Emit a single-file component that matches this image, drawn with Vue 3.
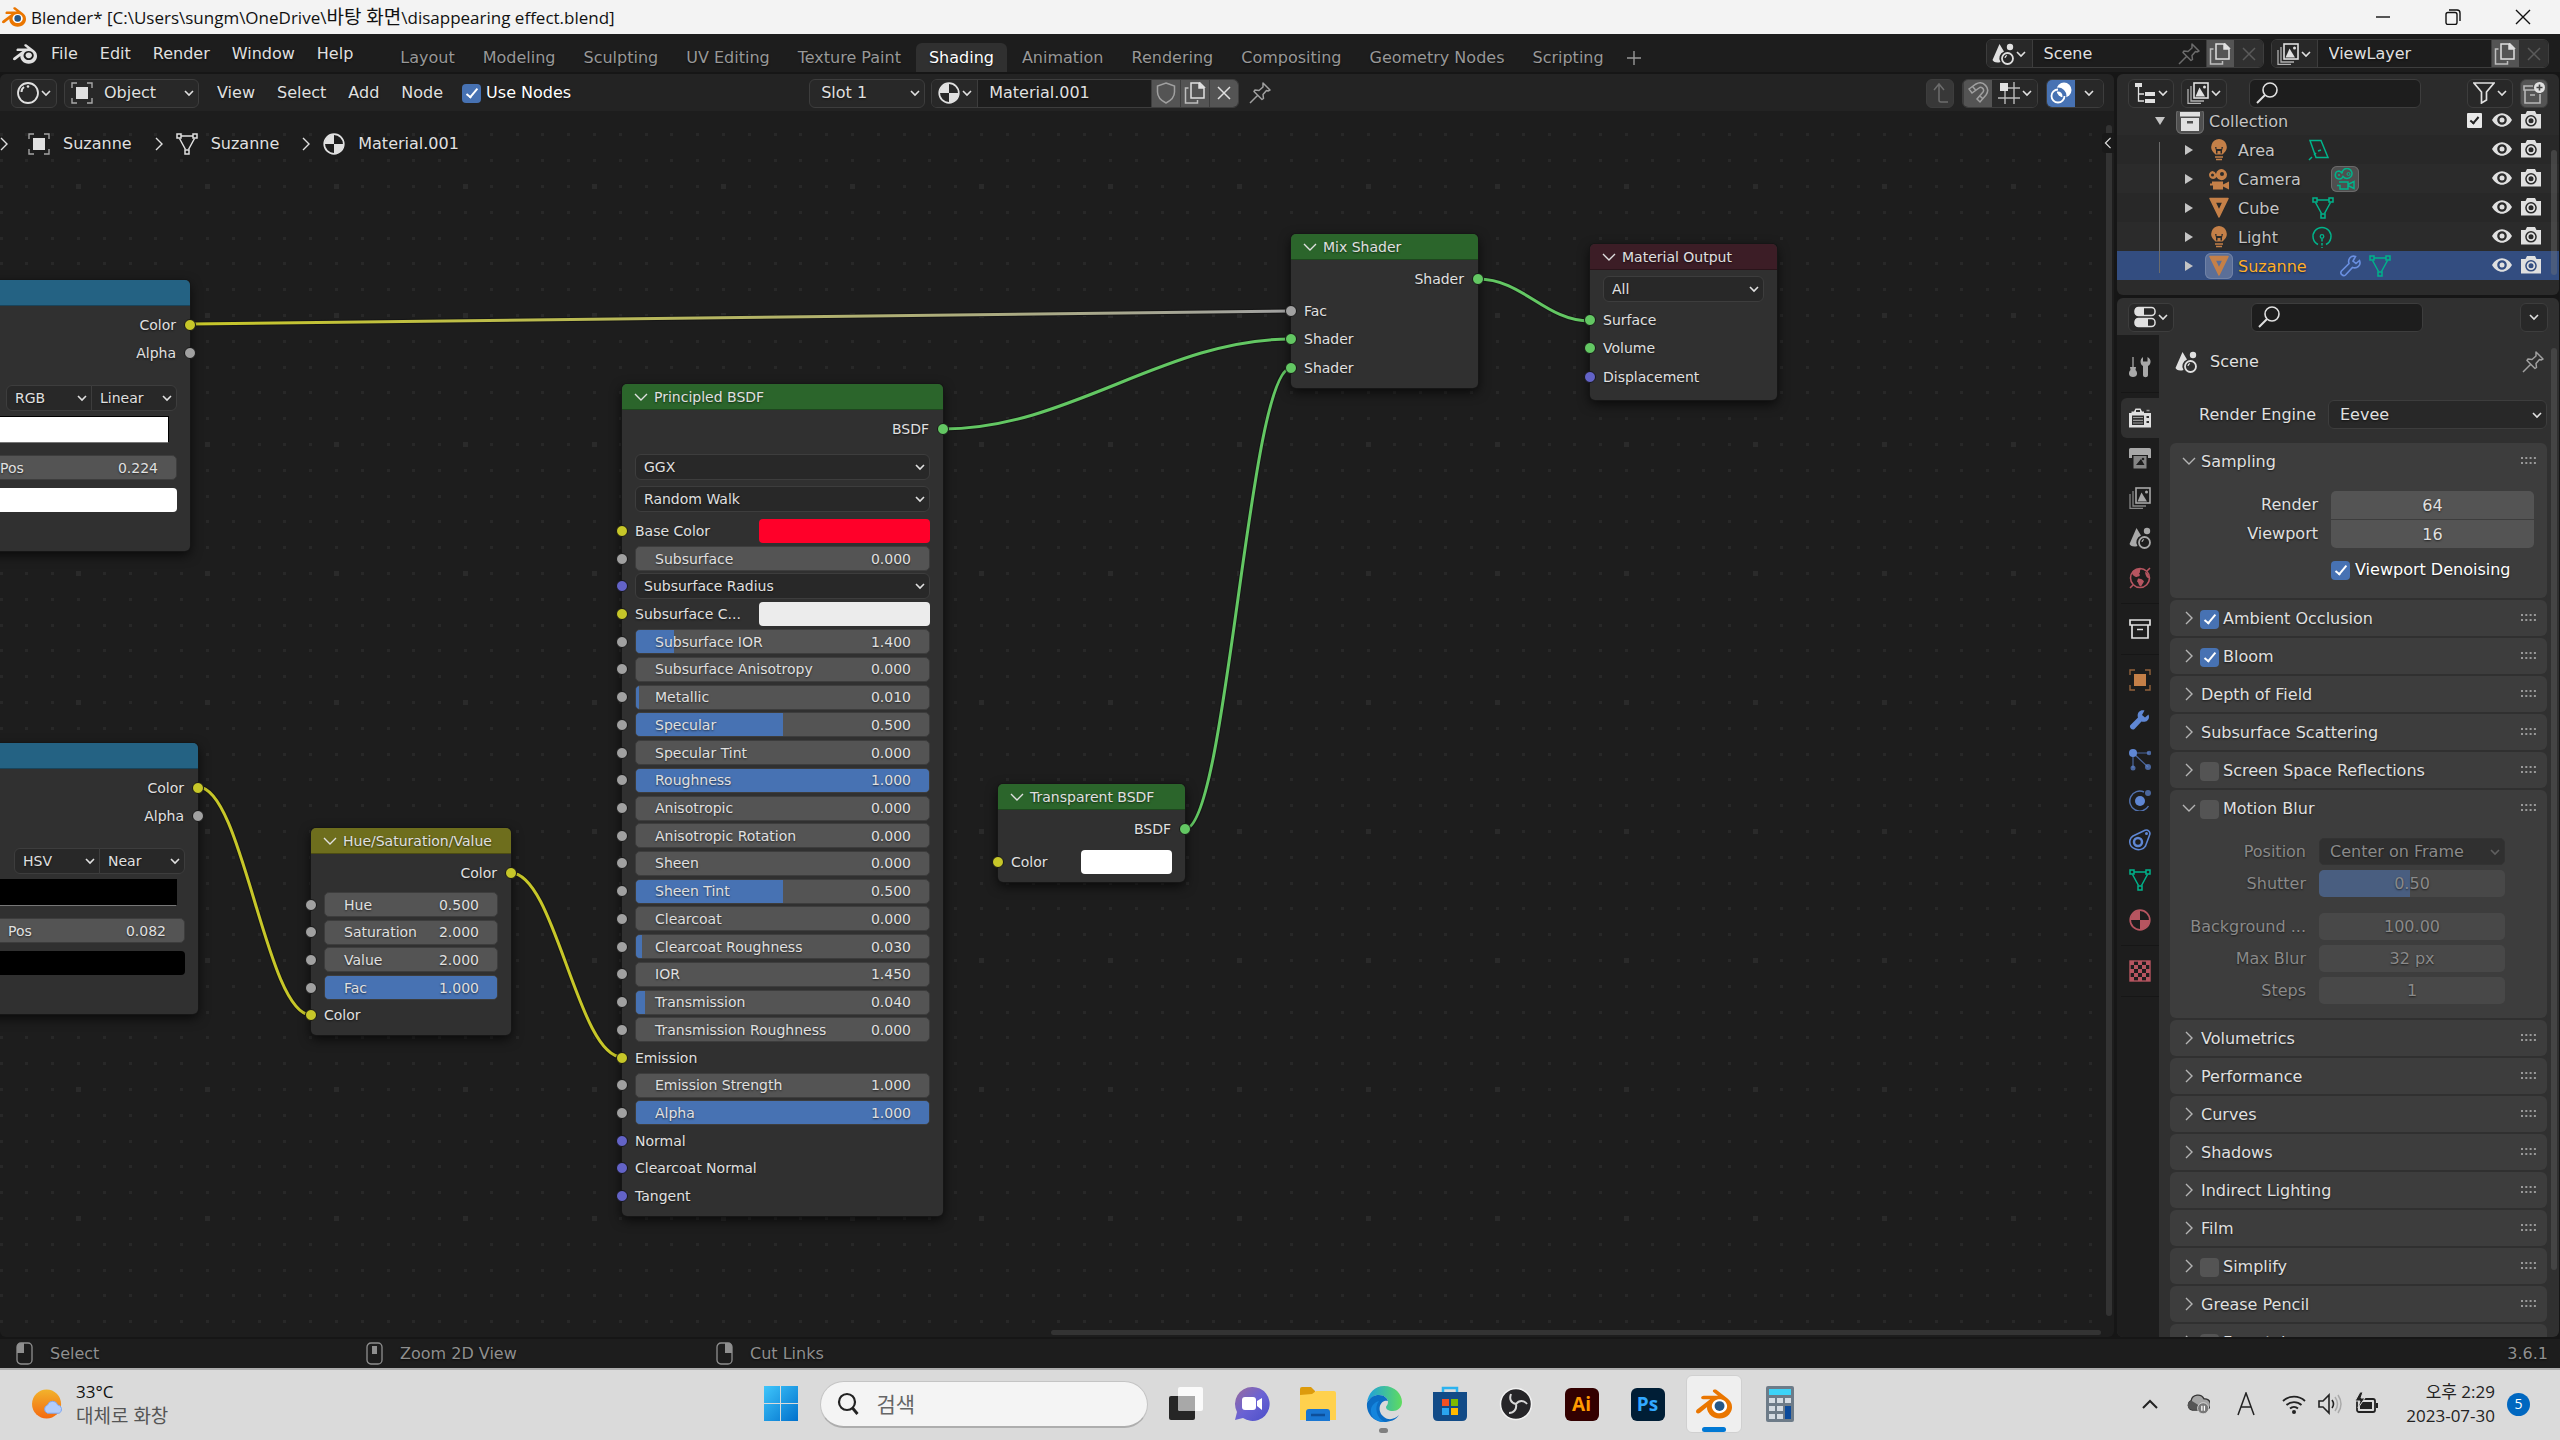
<template>
  <div class="desktop">
    <svg class="sprite" aria-hidden="true">
      <symbol id="i-blender" viewBox="0 0 24 24"><path fill="currentColor" d="M12.51 13.214c.046-.8.438-1.506 1.03-2.006a3.424 3.424 0 0 1 2.212-.79c.85 0 1.631.3 2.211.79.592.5.983 1.206 1.028 2.005.045.823-.285 1.586-.865 2.153a3.389 3.389 0 0 1-2.374.938 3.393 3.393 0 0 1-2.376-.938c-.58-.567-.91-1.33-.865-2.152M7.35 14.831c.006.314.106.922.256 1.398a7.372 7.372 0 0 0 1.593 2.757 8.227 8.227 0 0 0 2.787 2.001 8.947 8.947 0 0 0 3.66.76 8.964 8.964 0 0 0 3.657-.772 8.285 8.285 0 0 0 2.785-2.01 7.428 7.428 0 0 0 1.592-2.762 6.964 6.964 0 0 0 .25-3.074 7.123 7.123 0 0 0-1.016-2.779 7.764 7.764 0 0 0-1.852-2.043h.002L13.566 2.55l-.02-.015c-.492-.378-1.319-.376-1.86.002-.547.382-.609 1.015-.123 1.415l-.001.001 3.126 2.543-9.53.01h-.013c-.788.001-1.545.518-1.695 1.172-.154.665.38 1.217 1.2 1.22V8.9l4.83-.01-8.62 6.617-.034.025c-.813.622-1.075 1.658-.563 2.313.52.667 1.625.668 2.447.004L7.414 14s-.069.52-.063.831zm12.09 1.741c-.97.988-2.326 1.548-3.795 1.55-1.47.004-2.827-.552-3.797-1.538a4.51 4.51 0 0 1-1.036-1.622 4.282 4.282 0 0 1 .282-3.519 4.702 4.702 0 0 1 1.153-1.371c.942-.768 2.141-1.183 3.396-1.185 1.256-.002 2.455.41 3.398 1.175.48.391.87.854 1.152 1.367a4.28 4.28 0 0 1 .522 1.706 4.236 4.236 0 0 1-.239 1.811 4.54 4.54 0 0 1-1.035 1.626" /></symbol>
      <symbol id="i-blender-color" viewBox="0 0 24 24"><circle cx="15.7" cy="13.4" r="6" fill="#fff" /><circle cx="15.7" cy="13.4" r="3.3" fill="#265787" /><path fill="#ea7600" d="M7.35 14.831c.006.314.106.922.256 1.398a7.372 7.372 0 0 0 1.593 2.757 8.227 8.227 0 0 0 2.787 2.001 8.947 8.947 0 0 0 3.66.76 8.964 8.964 0 0 0 3.657-.772 8.285 8.285 0 0 0 2.785-2.01 7.428 7.428 0 0 0 1.592-2.762 6.964 6.964 0 0 0 .25-3.074 7.123 7.123 0 0 0-1.016-2.779 7.764 7.764 0 0 0-1.852-2.043h.002L13.566 2.55l-.02-.015c-.492-.378-1.319-.376-1.86.002-.547.382-.609 1.015-.123 1.415l-.001.001 3.126 2.543-9.53.01h-.013c-.788.001-1.545.518-1.695 1.172-.154.665.38 1.217 1.2 1.22V8.9l4.83-.01-8.62 6.617-.034.025c-.813.622-1.075 1.658-.563 2.313.52.667 1.625.668 2.447.004L7.414 14s-.069.52-.063.831zm12.09 1.741c-.97.988-2.326 1.548-3.795 1.55-1.47.004-2.827-.552-3.797-1.538a4.51 4.51 0 0 1-1.036-1.622 4.282 4.282 0 0 1 .282-3.519 4.702 4.702 0 0 1 1.153-1.371c.942-.768 2.141-1.183 3.396-1.185 1.256-.002 2.455.41 3.398 1.175.48.391.87.854 1.152 1.367a4.28 4.28 0 0 1 .522 1.706 4.236 4.236 0 0 1-.239 1.811 4.54 4.54 0 0 1-1.035 1.626" /></symbol>
      <symbol id="i-caret" viewBox="0 0 10 10"><path d="M1 3l4 4 4-4" fill="none" stroke="currentColor" stroke-width="1.6" /></symbol>
      <symbol id="i-chevron" viewBox="0 0 14 14"><path d="M1 4l6 6 6-6" fill="none" stroke="currentColor" stroke-width="1.4" /></symbol>
      <symbol id="i-chevron-right" viewBox="0 0 14 14"><path d="M4 1l6 6-6 6" fill="none" stroke="currentColor" stroke-width="1.4" /></symbol>
      <symbol id="i-triangle" viewBox="0 0 10 10"><path d="M1 0l8 5-8 5z" fill="currentColor" /></symbol>
      <symbol id="i-shader" viewBox="0 0 22 22"><circle cx="11" cy="11" r="10" fill="none" stroke="currentColor" stroke-width="1.8" /><path d="M4.5 10a6 6 0 0 1 2.500-5" fill="none" stroke="currentColor" stroke-width="2" /><circle cx="11" cy="4.5" r="1.3" fill="currentColor" /></symbol>
      <symbol id="i-object" viewBox="0 0 22 22"><rect x="5" y="5" width="12" height="12" fill="currentColor" /><path d="M1 6V1h5M16 1h5v5M21 16v5h-5M6 21H1v-5" fill="none" stroke="currentColor" stroke-width="1.4" opacity=".7" /></symbol>
      <symbol id="i-mesh" viewBox="0 0 22 22"><path d="M5 3h12M3.5 5.5l6 11M18.5 5.5l-6 11" fill="none" stroke="currentColor" stroke-width="1.5" /><path d="M1 1h4v4H1zM17 1h4v4h-4zM9 17h4v4H9z" fill="none" stroke="currentColor" stroke-width="1.5" /></symbol>
      <symbol id="i-meshobj" viewBox="0 0 22 22"><path d="M2 1.5h18L11 20z M7 5l4 8.5L15 5z" fill="currentColor" fill-rule="evenodd" stroke="currentColor" stroke-width="1.5" stroke-linejoin="round" /></symbol>
      <symbol id="i-material" viewBox="0 0 22 22"><circle cx="11" cy="11" r="9.8" fill="none" stroke="currentColor" stroke-width="1.7" /><path d="M11 1.5V11H1.5a9.5 9.5 0 0 1 9.5-9.5zM11 11h9.5a9.5 9.5 0 0 1-9.5 9.5z" fill="currentColor" /></symbol>
      <symbol id="i-shield" viewBox="0 0 22 22"><path d="M11 1l8.5 3v6c0 5-3.5 8.5-8.5 11-5-2.5-8.5-6-8.5-11V4z" fill="none" stroke="currentColor" stroke-width="1.5" /></symbol>
      <symbol id="i-copy" viewBox="0 0 22 22"><path d="M7 1h8v5h5v10H7zM16 1l4 4h-4z" fill="none" stroke="currentColor" stroke-width="1.5" /><path d="M15 0.5v5.5h5.5z" fill="currentColor" /><path d="M4.5 6H1.5v15h12v-3" fill="none" stroke="currentColor" stroke-width="1.5" opacity=".75" /></symbol>
      <symbol id="i-cross" viewBox="0 0 22 22"><path d="M5 5l12 12M17 5L5 17" fill="none" stroke="currentColor" stroke-width="1.5" /></symbol>
      <symbol id="i-pin" viewBox="0 0 22 22"><path d="M14 1l7 7-2 1-1.5-.5-3.5 4 .5 4-1.5 1-8-8 1-1.5 4 .5 4-3.5zM8.5 13.5L1 21" fill="none" stroke="currentColor" stroke-width="1.5" stroke-linejoin="round" /></symbol>
      <symbol id="i-up" viewBox="0 0 22 22"><path d="M5 8l5-6 5 6M10 2v16q0 2 2 2h7" fill="none" stroke="currentColor" stroke-width="1.5" /></symbol>
      <symbol id="i-magnet" viewBox="0 0 22 22"><path d="M2 7l7-5c7-4 15 4 10 11l-6 7-3-3 6-7c2-3-2-6-4-4l-7 5zM5.5 4.5l3.500 4M16 17l-3.500-3.500" fill="none" stroke="currentColor" stroke-width="1.5" /></symbol>
      <symbol id="i-grid" viewBox="0 0 22 22"><path d="M7 9v13M16 0v22M0 16h22M9 6h13" fill="none" stroke="currentColor" stroke-width="1.4" opacity=".8" /><rect x="2" y="1" width="8" height="8" fill="currentColor" /></symbol>
      <symbol id="i-overlay" viewBox="0 0 22 22"><circle cx="14" cy="8" r="7.5" fill="currentColor" /><circle cx="8" cy="14" r="6.5" fill="none" stroke="#4772b3" stroke-width="4" /><path d="M8 7.5a6.5 6.5 0 1 0 6.5 6.5" fill="none" stroke="currentColor" stroke-width="1.8" /><path d="M8 7.5a6.5 6.5 0 0 1 6.5 6.5" fill="none" stroke="#4772b3" stroke-width="1.5" /></symbol>
      <symbol id="i-scene" viewBox="0 0 22 22"><path d="M7.5 1L12 8.5a7 7 0 0 0-3.5 10.5C4 20.5 1 18.5 0.5 17z" fill="currentColor" /><circle cx="18" cy="4" r="3.2" fill="currentColor" /><circle cx="15.5" cy="15.5" r="5.5" fill="none" stroke="currentColor" stroke-width="1.8" /><path d="M13 15a3 3 0 0 1 2-2.5" fill="none" stroke="currentColor" stroke-width="1.2" /></symbol>
      <symbol id="i-layers" viewBox="0 0 22 22"><rect x="7" y="1" width="14" height="15" fill="none" stroke="currentColor" stroke-width="1.6" /><path d="M8.5 14.5l4-9 5.5 9z" fill="currentColor" /><circle cx="17.5" cy="5" r="1.5" fill="currentColor" /><path d="M4 4v15h13M1 7v14.5h13" fill="none" stroke="currentColor" stroke-width="1.3" opacity=".75" /></symbol>
      <symbol id="i-outliner" viewBox="0 0 22 22"><path d="M1 1h7v4H1zM11 10h10v4H11zM11 17h10v4H11z" fill="currentColor" /><path d="M4.5 5v14H10M4.5 12H10" fill="none" stroke="currentColor" stroke-width="1.3" /></symbol>
      <symbol id="i-search" viewBox="0 0 22 22"><circle cx="14" cy="8" r="7" fill="none" stroke="currentColor" stroke-width="1.6" /><path d="M9 13l-8 8" stroke="currentColor" stroke-width="2" /></symbol>
      <symbol id="i-filter" viewBox="0 0 22 22"><path d="M1 1h20l-7.5 9v8l-5 3V10z" fill="none" stroke="currentColor" stroke-width="1.7" /></symbol>
      <symbol id="i-newcol" viewBox="0 0 22 22"><path d="M10 4H1v4h11M2 8v13h15v-9M7 13h5" fill="none" stroke="currentColor" stroke-width="1.6" opacity=".7" /><circle cx="16.5" cy="5.5" r="5.5" fill="currentColor" /><path d="M16.5 2.5v6M13.5 5.5h6" stroke="#444" stroke-width="1.6" /></symbol>
      <symbol id="i-collection" viewBox="0 0 22 22"><path d="M1 2h20v5H1zM3 7v13h16V7M8 11.5h6" fill="none" stroke="currentColor" stroke-width="1.7" /></symbol>
      <symbol id="i-collection-full" viewBox="0 0 22 22"><path d="M1 2h20v4.5H1z" fill="currentColor" /><path fill-rule="evenodd" d="M2 8h18v13H2zM8 11v2.500h6V11z" fill="currentColor" /></symbol>
      <symbol id="i-bulb" viewBox="0 0 22 22"><path fill-rule="evenodd" d="M11 0a8 8 0 0 0-5 14l1.500 1.500h7L16 14a8 8 0 0 0-5-14zM7 8h1.5v2h5V8H15l-1 3.500v3h-1.500V12h-3v2.500H8v-3z" fill="currentColor" /><path d="M7 18h8M8 20.5h6" stroke="currentColor" stroke-width="1.5" /></symbol>
      <symbol id="i-movie" viewBox="0 0 22 22"><path fill-rule="evenodd" d="M4.500 3A4 4 0 1 0 8.500 9a5.500 5.500 0 1 0-.5-3A4 4 0 0 0 4.500 3zM4.500 5.500a1.500 1.500 0 1 1 0 3 1.500 1.500 0 0 1 0-3zM14 4a2 2 0 1 1 0 4 2 2 0 0 1 0-4zM4 13.500h11v3l6-3v8l-6-3v3H5v-4H2v-2h2z" fill="currentColor" /></symbol>
      <symbol id="i-movie-line" viewBox="0 0 22 22"><path d="M5 3a4 4 0 1 0 4 5.500 5 5 0 1 0-1-3A4 4 0 0 0 5 3zM5 14h9v2.500l6-3v7l-6-3V21H6v-3.500H3" fill="none" stroke="currentColor" stroke-width="1.5" /><circle cx="14.5" cy="6" r="1.5" fill="none" stroke="currentColor" /><circle cx="5" cy="7" r="1" fill="currentColor" /></symbol>
      <symbol id="i-area" viewBox="0 0 22 22"><path d="M2 1.5h11l7 17H8zM10 12l3-1M8 14l-2 2M4 18l-3 3" fill="none" stroke="currentColor" stroke-width="1.5" /></symbol>
      <symbol id="i-point" viewBox="0 0 22 22"><path d="M7 18.5a9 9 0 1 1 8 0" fill="none" stroke="currentColor" stroke-width="1.5" /><circle cx="11" cy="10.5" r="1.8" fill="none" stroke="currentColor" stroke-width="1.3" /><path d="M11 13v9" stroke="currentColor" stroke-width="1.5" stroke-dasharray="2.5 1.5" /></symbol>
      <symbol id="i-wrench" viewBox="0 0 22 22"><path d="M19.5 5.5l-3.500 3-3-2.500 2.500-4.500C11 0 7.500 4 9 8.500L1.500 16c-2 2.500 1.500 6 4 4l7-7.500c4.500 1.500 9-2 7-7z" fill="currentColor" /></symbol>
      <symbol id="i-wrench-line" viewBox="0 0 22 22"><path d="M19.5 5.5l-3.500 3-3-2.500 2.500-4.500C11 0 7.500 4 9 8.500L1.500 16c-2 2.500 1.500 6 4 4l7-7.500c4.500 1.500 9-2 7-7z" fill="none" stroke="currentColor" stroke-width="1.6" /></symbol>
      <symbol id="i-eye" viewBox="0 0 22 22"><path fill-rule="evenodd" d="M1 11c5-9 15-9 20 0-5 9-15 9-20 0zM11 6.2a4.800 4.800 0 1 0 0 9.600 4.800 4.800 0 0 0 0-9.600z" fill="currentColor" /><circle cx="11" cy="11" r="2.5" fill="currentColor" /></symbol>
      <symbol id="i-camera" viewBox="0 0 22 22"><path fill-rule="evenodd" d="M1 5h4.500L7 2h8l1.500 3H21v14.500H1zM11 6a5.800 5.800 0 1 0 0 11.600A5.800 5.800 0 0 0 11 6z" fill="currentColor" /><circle cx="11" cy="11.8" r="3.4" fill="none" stroke="currentColor" stroke-width="1.8" /></symbol>
      <symbol id="i-props" viewBox="0 0 22 22"><rect x="1" y="1.5" width="20" height="8" rx="3.5" fill="none" stroke="currentColor" stroke-width="1.5" /><rect x="1" y="12.5" width="20" height="8" rx="3.5" fill="none" stroke="currentColor" stroke-width="1.5" /><path d="M4 1.5h6v8H4a3 3 0 0 1-3-3v-2a3 3 0 0 1 3-3zM4 12.5h10v8H4a3 3 0 0 1-3-3v-2a3 3 0 0 1 3-3z" fill="currentColor" /></symbol>
      <symbol id="i-tool" viewBox="0 0 22 22"><path d="M4 1v10" stroke="currentColor" stroke-width="1.3" /><path d="M1 11h6l-.5 3c1.500 1 1.500 3 1.500 4 0 4-8 4-8 0 0-1 0-3 1.500-4z" fill="currentColor" /><path d="M14 1v4.500h4.500V1c4 2 4 7 .5 9v9c0 3-5 3-5 0v-9c-3.500-2-3-7 0-9z" fill="currentColor" /></symbol>
      <symbol id="i-render" viewBox="0 0 22 22"><path fill-rule="evenodd" d="M0 6h2.500V4.500H5L6.500 1.500h5L13 4.500h2V6h7v14.500H0zM3 8.500V18h12V8.500zM17.500 9v2H20V9zM17.500 14v2H20v-2zM7 3v2h4V3z" fill="currentColor" /><path d="M4 10.500h10M4 13.300h10M4 16h10" stroke="currentColor" stroke-width="1.2" opacity=".6" /><path d="M17.500 3.500h3" stroke="currentColor" stroke-width="1.5" opacity=".6" /></symbol>
      <symbol id="i-output" viewBox="0 0 22 22"><path d="M1.500 1h19a1.500 1.500 0 0 1 1.500 1.500V11h-3V8H3v3H0V2.500A1.500 1.500 0 0 1 1.500 1z" fill="currentColor" /><path fill-rule="evenodd" d="M4.500 9h13v12.500h-13zM7 18h8.500l-3.500-6z" fill="currentColor" opacity=".75" /><circle cx="14" cy="12" r="1.3" fill="#222" /></symbol>
      <symbol id="i-world" viewBox="0 0 22 22"><circle cx="11" cy="11" r="9.5" fill="none" stroke="currentColor" stroke-width="1.6" /><path d="M3 5c3-4 7-3.500 9-3-2 2 0 3-2 4.500 1.500 1 1 3-1 3-2 .5-1.500 1-3 0S3 8 3 5zM9 11.500c3 0 5 1 6 3-1 2-2 3-3 5-3-1-2-4-4-5zM16 5c2 0 4 3 4.500 6-2 1-4-2-4.500-6z" fill="currentColor" /><path d="M1 21l3-3M18 4l3-3" stroke="currentColor" stroke-width="1.6" /></symbol>
      <symbol id="i-particles" viewBox="0 0 22 22"><path d="M4 4h16M4 4v15M4 4l15 14" fill="none" stroke="currentColor" stroke-width="1.2" opacity=".7" /><circle cx="4" cy="4" r="4" fill="currentColor" /><circle cx="20" cy="4" r="2.3" fill="currentColor" opacity=".7" /><circle cx="4" cy="19" r="2.5" fill="currentColor" opacity=".7" /><circle cx="19" cy="18" r="3" fill="currentColor" opacity=".7" /></symbol>
      <symbol id="i-physics" viewBox="0 0 22 22"><circle cx="11" cy="12" r="5" fill="currentColor" /><path d="M15 3a10 10 0 1 0 4.500 14" fill="none" stroke="currentColor" stroke-width="1.4" opacity=".8" /><circle cx="19" cy="4" r="3" fill="currentColor" opacity=".7" /></symbol>
      <symbol id="i-constraint" viewBox="0 0 22 22"><path d="M4 7L16 1.200c3-1 6 2 4.500 5L16.500 17C12 24-1 20 1 11c.5-2 1.500-3 3-4z" fill="none" stroke="currentColor" stroke-width="1.6" /><circle cx="9" cy="13" r="4" fill="none" stroke="currentColor" stroke-width="2.5" /><circle cx="17.5" cy="4.5" r="1.5" fill="currentColor" /></symbol>
      <symbol id="i-texture" viewBox="0 0 22 22"><rect x="1" y="1" width="20" height="20" fill="none" stroke="currentColor" stroke-width="1.4" /><path d="M1 1h4v4H1zM9 1h4v4H9zM17 1h4v4h-4zM5 5h4v4H5zM13 5h4v4h-4zM1 9h4v4H1zM9 9h4v4H9zM17 9h4v4h-4zM5 13h4v4H5zM13 13h4v4h-4zM1 17h4v4H1zM9 17h4v4H9zM17 17h4v4h-4z" fill="currentColor" /></symbol>
      <symbol id="i-dots" viewBox="0 0 15 8"><path d="M0 1h15M0 6h15" stroke="currentColor" stroke-width="2" stroke-dasharray="2 2.3" /></symbol>
    </svg>

    <header class="titlebar">
      <svg class="titlebar__logo"><use href="#i-blender-color" /></svg>
      <h1 class="titlebar__text">Blender* [C:\Users\sungm\OneDrive\<span class="ko">바탕 화면</span>\disappearing effect.blend]</h1>
      <div class="titlebar__buttons">
        <button aria-label="Minimize"><svg viewBox="0 0 16 16"><path d="M1 8h14" /></svg></button>
        <button aria-label="Restore"><svg viewBox="0 0 16 16"><rect x="1" y="3.5" width="11" height="12" rx="2" /><path d="M4 1h8q3 0 3 3v8" /></svg></button>
        <button aria-label="Close"><svg viewBox="0 0 16 16"><path d="M1 1l14 14M15 1L1 15" /></svg></button>
      </div>
    </header>

    <div class="blender">
      <nav class="topbar">
        <svg class="topbar__logo"><use href="#i-blender" /></svg>
        <div class="menus">
          <button v-for="m in mainMenus" :key="m">{{ m }}</button>
        </div>
        <div class="workspaces">
          <button v-for="w in workspaces" :key="w" :class="{ active: w === 'Shading' }">{{ w }}</button>
          <button class="workspaces__add" aria-label="Add workspace">
            <svg viewBox="0 0 14 14"><path d="M7 0v14M0 7h14" stroke="currentColor" stroke-width="1.4" /></svg>
          </button>
        </div>
        <div v-for="b in idBlocks" :key="b.name" class="group idblock">
          <button class="group__menu" :aria-label="b.name"><svg class="icon"><use :href="'#' + b.icon" /></svg><svg class="caret"><use href="#i-caret" /></svg></button>
          <div class="idblock__name">
            <input :value="b.name" :aria-label="b.name + ' name'" />
            <svg v-if="b.pin" class="icon dim"><use href="#i-pin" /></svg>
          </div>
          <button class="group__lit" aria-label="New"><svg class="icon"><use href="#i-copy" /></svg></button>
          <button class="group__off" aria-label="Remove" disabled><svg class="icon"><use href="#i-cross" /></svg></button>
        </div>
      </nav>

      <main class="areas">
        <section class="editor">
          <div class="header">
            <button class="btn editor__type" aria-label="Editor type"><svg class="icon"><use href="#i-shader" /></svg><svg class="caret"><use href="#i-caret" /></svg></button>
            <div class="menu editor__mode">
              <svg class="icon"><use href="#i-object" /></svg>
              <select aria-label="Shader type"><option>Object</option></select>
              <svg class="caret"><use href="#i-caret" /></svg>
            </div>
            <div class="menus editor__menus">
              <button v-for="m in nodeMenus" :key="m">{{ m }}</button>
            </div>
            <label class="check"><input type="checkbox" checked />Use Nodes</label>
            <div class="menu editor__slot">
              <select aria-label="Slot"><option>Slot 1</option></select>
              <svg class="caret"><use href="#i-caret" /></svg>
            </div>
            <div class="group">
              <button class="group__menu" aria-label="Browse material"><svg class="icon"><use href="#i-material" /></svg><svg class="caret"><use href="#i-caret" /></svg></button>
              <div class="idblock__name"><input value="Material.001" aria-label="Material name" /></div>
              <button class="group__lit" aria-label="Fake user"><svg class="icon soft"><use href="#i-shield" /></svg></button>
              <button class="group__lit" aria-label="New material"><svg class="icon"><use href="#i-copy" /></svg></button>
              <button class="group__lit" aria-label="Unlink"><svg class="icon"><use href="#i-cross" /></svg></button>
            </div>
            <button class="plain" aria-label="Pin"><svg class="icon soft"><use href="#i-pin" /></svg></button>
            <div class="header__right">
              <button class="btn btn--off" aria-label="Parent node tree"><svg class="icon dim"><use href="#i-up" /></svg></button>
              <div class="group group--snap">
                <button class="group__lit" aria-label="Snap"><svg class="icon soft"><use href="#i-magnet" /></svg></button>
                <button class="group__menu" aria-label="Snap to"><svg class="icon"><use href="#i-grid" /></svg><svg class="caret"><use href="#i-caret" /></svg></button>
              </div>
              <div class="group group--overlay">
                <button class="group__on" aria-label="Overlays"><svg class="icon"><use href="#i-overlay" /></svg></button>
                <button class="group__drop" aria-label="Overlay options"><svg class="caret"><use href="#i-caret" /></svg></button>
              </div>
            </div>
          </div>

          <div class="canvas">
            <svg class="canvas__wires">
              <defs>
                <pattern id="grid" x="76" y="-56" width="129" height="129" patternUnits="userSpaceOnUse">
                  <template v-for="gx in gridSteps" :key="gx">
                    <rect v-for="gy in gridSteps" :key="gy" :x="gx" :y="gy" width="3" height="3" fill="#282828" />
                  </template>
                  <rect x="0" y="0" width="5" height="5" fill="#2a2a2a" />
                </pattern>
                <linearGradient id="fade" gradientUnits="userSpaceOnUse" x1="190" y1="0" x2="1291" y2="0">
                  <stop offset="0" stop-color="#c7c729" />
                  <stop offset="1" stop-color="#a1a1a1" />
                </linearGradient>
              </defs>
              <rect width="100%" height="100%" fill="url(#grid)" />
              <g v-for="l in links" :key="l.path" fill="none">
                <path :d="l.path" stroke="#161616" stroke-width="5" />
                <path :d="l.path" :stroke="l.color" stroke-width="3" />
              </g>
            </svg>

            <div class="crumbs">
              <svg class="crumbs__tab"><use href="#i-chevron-right" /></svg>
              <svg class="icon"><use href="#i-object" /></svg><span>Suzanne</span>
              <svg class="crumbs__sep"><use href="#i-chevron-right" /></svg>
              <svg class="icon"><use href="#i-mesh" /></svg><span>Suzanne</span>
              <svg class="crumbs__sep"><use href="#i-chevron-right" /></svg>
              <svg class="icon"><use href="#i-material" /></svg><span>Material.001</span>
            </div>

            <article
              v-for="(n, ni) in nodes"
              :key="ni"
              class="node"
              :style="{ left: n.x + 'px', top: n.y + 'px', width: n.w + 'px', height: n.h + 'px' }"
            >
              <h2 class="node__title" :class="'node__title--' + n.kind">
                <svg><use href="#i-chevron" /></svg>{{ n.title }}
              </h2>
              <div v-if="n.outs" class="node__outs">
                <p v-for="o in n.outs" :key="o.label">{{ o.label }}<i class="socket socket--out" :class="o.type" /></p>
              </div>
              <div v-if="n.menus" class="node__menus" :class="{ tight: !n.outs }">
                <div v-for="m in n.menus" :key="m" class="menu">
                  <select :aria-label="m"><option>{{ m }}</option></select>
                  <svg class="caret"><use href="#i-caret" /></svg>
                </div>
              </div>
              <div v-if="n.ramp" class="ramp">
                <div class="ramp__modes">
                  <div v-for="m in n.ramp.modes" :key="m" class="menu">
                    <select :aria-label="m"><option>{{ m }}</option></select>
                    <svg class="caret"><use href="#i-caret" /></svg>
                  </div>
                </div>
                <div class="ramp__band" :class="n.ramp.tone" />
                <label class="field ramp__pos"><span>Pos</span><input :value="n.ramp.pos" /></label>
                <button class="swatch ramp__swatch" :class="n.ramp.tone" aria-label="Stop color" />
              </div>
              <div v-if="n.ins" class="node__ins" :class="{ 'after-menus': n.menus }">
                <div v-for="(s, si) in n.ins" :key="si" class="node__row">
                  <i class="socket" :class="s.type" />
                  <label v-if="s.value" class="field">
                    <b v-if="s.fill" class="field__fill" :style="{ width: s.fill + '%' }" />
                    <span>{{ s.label }}</span><input :value="s.value" />
                  </label>
                  <div v-else-if="s.menu" class="menu">
                    <select :aria-label="s.label"><option>{{ s.label }}</option></select>
                    <svg class="caret"><use href="#i-caret" /></svg>
                  </div>
                  <template v-else>
                    <span>{{ s.label }}</span>
                    <button v-if="s.tone" class="swatch" :class="s.tone" :aria-label="s.label" />
                  </template>
                </div>
              </div>
            </article>

            <div class="canvas__vbar" />
            <div class="canvas__hbar" />
            <button class="canvas__side" aria-label="Show sidebar"><svg><use href="#i-chevron-right" /></svg></button>
          </div>
        </section>

        <aside class="sidebar">
          <section class="outliner">
            <div class="header">
              <button class="btn" aria-label="Editor type"><svg class="icon"><use href="#i-outliner" /></svg><svg class="caret"><use href="#i-caret" /></svg></button>
              <button class="btn" aria-label="Display mode"><svg class="icon"><use href="#i-layers" /></svg><svg class="caret"><use href="#i-caret" /></svg></button>
              <label class="search"><svg class="icon"><use href="#i-search" /></svg><input aria-label="Filter outliner" /></label>
              <button class="btn outliner__filter" aria-label="Filter"><svg class="icon"><use href="#i-filter" /></svg><svg class="caret"><use href="#i-caret" /></svg></button>
              <button class="btn btn--new" aria-label="New collection"><svg class="icon"><use href="#i-newcol" /></svg></button>
            </div>
            <div class="outliner__body">
              <ul class="tree">
                <li v-for="o in objects" :key="o.name" class="tree__row" :class="{ root: o.root, selected: o.selected }">
                  <svg class="tree__arrow"><use href="#i-triangle" /></svg>
                  <span class="tree__icon" :class="{ boxed: o.root || o.selected }"><svg class="icon"><use :href="'#' + o.icon" /></svg></span>
                  <span class="tree__name">{{ o.name }}</span>
                  <span class="tree__data">
                    <span v-for="d in o.data" :key="d" :class="{ boxed: d === 'i-movie-line', wrench: d === 'i-wrench-line' }"><svg class="icon"><use :href="'#' + d" /></svg></span>
                  </span>
                  <span class="tree__toggles">
                    <input v-if="o.root" type="checkbox" class="tree__check" checked aria-label="Exclude from view layer" />
                    <button aria-label="Hide in viewport"><svg class="icon"><use href="#i-eye" /></svg></button>
                    <button aria-label="Disable in renders"><svg class="icon"><use href="#i-camera" /></svg></button>
                  </span>
                </li>
              </ul>
              <div class="outliner__line" />
              <div class="outliner__bar" />
            </div>
          </section>

          <section class="props">
            <div class="header">
              <button class="btn" aria-label="Editor type"><svg class="icon"><use href="#i-props" /></svg><svg class="caret"><use href="#i-caret" /></svg></button>
              <label class="search"><svg class="icon"><use href="#i-search" /></svg><input aria-label="Search properties" /></label>
              <button class="btn props__options" aria-label="Options"><svg class="caret"><use href="#i-caret" /></svg></button>
            </div>
            <div class="props__main">
              <nav class="tabs">
                <div v-for="(g, gi) in tabs" :key="gi" class="tabs__group">
                  <button v-for="t in g" :key="t.icon" :class="{ active: t.active }" :aria-label="t.label"><svg class="icon" :class="t.tint"><use :href="'#' + t.icon" /></svg></button>
                </div>
              </nav>
              <div class="props__body">
                <div class="props__context">
                  <svg class="icon"><use href="#i-scene" /></svg>Scene
                  <button class="plain" aria-label="Pin"><svg class="icon soft"><use href="#i-pin" /></svg></button>
                </div>
                <div class="props__engine">
                  <label for="engine">Render Engine</label>
                  <div class="menu"><select id="engine"><option>Eevee</option></select><svg class="caret"><use href="#i-caret" /></svg></div>
                </div>

                <section v-for="p in panels" :key="p.title" class="panel">
                  <h3 class="panel__head">
                    <svg class="panel__arrow"><use :href="p.open ? '#i-chevron' : '#i-chevron-right'" /></svg>
                    <label v-if="p.check !== undefined" class="check"><input type="checkbox" :checked="p.check" />{{ p.title }}</label>
                    <span v-else>{{ p.title }}</span>
                    <svg class="panel__grip"><use href="#i-dots" /></svg>
                  </h3>
                  <div v-if="p.title === 'Sampling'" class="sampling">
                    <label for="s-render">Render</label><input id="s-render" value="64" />
                    <label for="s-view">Viewport</label><input id="s-view" value="16" />
                    <label class="check"><input type="checkbox" checked />Viewport Denoising</label>
                  </div>
                  <div v-if="p.title === 'Motion Blur'" class="blur">
                    <label for="b-pos">Position</label>
                    <div class="menu"><select id="b-pos" disabled><option>Center on Frame</option></select><svg class="caret"><use href="#i-caret" /></svg></div>
                    <label for="b-shutter">Shutter</label><input id="b-shutter" class="half" value="0.50" disabled />
                    <label for="b-bg" class="blur__gap">Background ...</label><input id="b-bg" class="blur__gap" value="100.00" disabled />
                    <label for="b-max">Max Blur</label><input id="b-max" value="32 px" disabled />
                    <label for="b-steps">Steps</label><input id="b-steps" value="1" disabled />
                  </div>
                </section>
                <div class="props__bar" />
              </div>
            </div>
          </section>
        </aside>
      </main>

      <footer class="status">
        <span v-for="s in hints" :key="s.text" class="status__hint">
          <svg viewBox="0 0 18 24"><rect x="1" y="1" width="15" height="21" rx="4" fill="none" stroke="currentColor" stroke-width="1.3" /><path :d="s.button" fill="currentColor" /></svg>{{ s.text }}
        </span>
        <span class="status__version">3.6.1</span>
      </footer>
    </div>

    <footer class="taskbar">
      <button class="weather">
        <svg viewBox="0 0 34 32">
          <defs>
            <linearGradient id="sun" x1="0" y1="0" x2="0" y2="1"><stop offset="0" stop-color="#f2b32c" /><stop offset="1" stop-color="#f4690f" /></linearGradient>
          </defs>
          <circle cx="15" cy="15.5" r="15" fill="url(#sun)" />
          <path d="M16 25a4.500 4.500 0 0 1 0-8.500 5.500 5.500 0 0 1 10.500 0A4.500 4.500 0 0 1 28 25z" fill="#b3cdfb" stroke="#7fa5ee" />
        </svg>
        <span><b>33°C</b><span class="ko">대체로 화창</span></span>
      </button>

      <div class="apps">
        <button class="apps__start" aria-label="Start">
          <svg viewBox="0 0 36 36">
            <defs><linearGradient id="win" x1="0" y1="0" x2="1" y2="1"><stop offset="0" stop-color="#3fc6fb" /><stop offset="1" stop-color="#0070cc" /></linearGradient></defs>
            <path d="M1 0h16v17H1zM18 0h17v17H18zM1 18h16v17H1zM18 18h17v17H18z" fill="url(#win)" />
          </svg>
        </button>
        <label class="apps__search">
          <svg viewBox="0 0 24 24"><circle cx="11" cy="10" r="8" fill="none" stroke="#222" stroke-width="2.2" /><path d="M16.5 16l5 6" stroke="#222" stroke-width="2.8" /></svg>
          <input placeholder="검색" aria-label="검색" />
        </label>
        <button aria-label="Task view">
          <svg viewBox="0 0 36 36"><rect x="1" y="10" width="26" height="24" rx="2" fill="#262626" /><rect x="10" y="1" width="25" height="24" rx="2" fill="#fff" opacity=".85" /><path d="M10 10h17v15H12q-2 0-2-2z" fill="#a8a8a8" /></svg>
        </button>
        <button aria-label="Chat">
          <svg viewBox="0 0 36 36">
            <defs><linearGradient id="chat" x1="0" y1="0" x2="1" y2="1"><stop offset="0" stop-color="#9a6b9a" /><stop offset=".5" stop-color="#6a62d4" /><stop offset="1" stop-color="#4b4fc8" /></linearGradient></defs>
            <path d="M18 1a17 17 0 1 1-9 31l-8 2 2-8A17 17 0 0 1 18 1z" fill="url(#chat)" /><rect x="8" y="11" width="14" height="13" rx="3" fill="#fff" /><path d="M23 15l5-3v12l-5-4z" fill="#fff" />
          </svg>
        </button>
        <button aria-label="File Explorer">
          <svg viewBox="0 0 36 36"><path d="M0 3q0-2 2-2h9l4 4v7H0z" fill="#dd9b0c" /><path d="M0 9l12-1 4-3h18q2 0 2 2v27H0z" fill="#ffd14d" /><path d="M6 35V26q0-3 3-3h18q3 0 3 3v9z" fill="#1976d2" /><path d="M11 29h14" stroke="#0d4f9a" stroke-width="2.5" /></svg>
        </button>
        <button class="running" aria-label="Edge">
          <svg viewBox="0 0 36 36">
            <defs><linearGradient id="edge" x1="0" y1="0" x2="1" y2="0"><stop offset="0" stop-color="#1d9fe0" /><stop offset="1" stop-color="#5fdc5e" /></linearGradient></defs>
            <path d="M1 17C2 7 9 0 18 0c11 0 18 8 18 16 0 6-5 9-9 9-5 0-7-2-7-4 0-1 2-2 2-5 0-4-4-7-9-7C8 9 3 12 1 17z" fill="url(#edge)" />
            <path d="M1 17C4 11 8 9 13 9c5 0 8 3 9 6-8-2-12 10-4 16 5 4 11 2 15-2-3 5-9 7-15 7C8 36 0 28 1 17z" fill="#0b6dc4" />
            <path d="M13 15c-5 6-3 17 6 21C9 36 4 30 5 23c1-4 4-7 8-8z" fill="#1485dd" />
          </svg>
        </button>
        <button aria-label="Microsoft Store">
          <svg viewBox="0 0 36 36"><path d="M11 7V2h14v5" fill="none" stroke="#2cb3f0" stroke-width="2.5" /><path d="M1 6h34v24q0 5-5 5H6q-5 0-5-5z" fill="#124b87" /><path d="M10 13h7v7h-7z" fill="#f25022" /><path d="M19 13h7v7h-7z" fill="#7fba00" /><path d="M10 22h7v7h-7z" fill="#2aa5f0" /><path d="M19 22h7v7h-7z" fill="#ffb900" /></svg>
        </button>
        <button aria-label="OBS Studio">
          <svg viewBox="0 0 36 36"><circle cx="18" cy="18" r="15.5" fill="#262528" stroke="#f2f2f2" stroke-width="1.5" /><path d="M18 18c-5-1-7-5-5-10M18 18c3-4 8-4 11 0M18 18c1 5-2 9-7 9" fill="none" stroke="#d8d8d8" stroke-width="2" /></svg>
        </button>
        <button aria-label="Illustrator"><span class="adobe adobe--ai">Ai</span></button>
        <button aria-label="Photoshop"><span class="adobe adobe--ps">Ps</span></button>
        <button class="current" aria-label="Blender"><svg><use href="#i-blender-color" /></svg></button>
        <button aria-label="Calculator">
          <svg viewBox="0 0 36 36"><rect x="4" y="0" width="28" height="36" rx="2" fill="#6d7b88" /><rect x="7" y="3" width="22" height="6" fill="#3cd3f7" /><path d="M7 12h6v5H7zM15 12h6v5h-6zM23 12h6v5h-6zM7 20h6v5H7zM15 20h6v5h-6zM7 28h6v5H7zM15 28h6v5h-6z" fill="#d4dbe2" /><rect x="23" y="20" width="6" height="13" fill="#0b4a9b" /></svg>
        </button>
      </div>

      <div class="tray">
        <button aria-label="Show hidden icons"><svg viewBox="0 0 24 24"><path d="M5 16l7-7 7 7" fill="none" stroke="#222" stroke-width="2" /></svg></button>
        <button aria-label="OneDrive"><svg viewBox="0 0 28 24"><path d="M7 19a6 6 0 0 1-1-11 8 8 0 0 1 15-2 6 6 0 0 1 2 13z" fill="#a5a5a5" stroke="#333" stroke-width="1.5" /><path d="M7 18.500a5 5 0 0 1 0-10l11 7v3z" fill="#555" /><circle cx="20" cy="17" r="6.5" fill="#777" stroke="#ddd" /><path d="M18.5 14v6M21.5 14v6" stroke="#fff" stroke-width="1.5" /></svg></button>
        <button aria-label="Input language"><svg viewBox="0 0 24 24"><path d="M4 23L12 1l8 22M7 15h10" fill="none" stroke="#222" stroke-width="1.5" /></svg></button>
        <button class="tray__net" aria-label="Network, volume, battery">
          <svg viewBox="0 0 24 24"><path d="M1 9a16 16 0 0 1 22 0M4.5 13a11 11 0 0 1 15 0M8 16.500a6 6 0 0 1 8 0" fill="none" stroke="#222" stroke-width="1.8" /><circle cx="12" cy="20" r="2" fill="#222" /></svg>
          <svg viewBox="0 0 24 24"><path d="M1 9h4l6-6v18l-6-6H1zM14 8q3 4 0 8" fill="none" stroke="#222" stroke-width="1.6" /><path d="M17 5q5 7 0 14M20 3q6 9 0 18" fill="none" stroke="#aaa" stroke-width="1.5" /></svg>
          <svg viewBox="0 0 24 24"><rect x="3" y="7" width="18" height="13" rx="2" fill="none" stroke="#222" stroke-width="1.8" /><path d="M6 10h12v7H6zM22 11h2v5h-2z" fill="#222" /><path d="M6 0L1 9h5l-2 7 7-10H7l2-6z" fill="#222" stroke="#dadada" /></svg>
        </button>
        <button class="tray__clock">오후 2:29<br />2023-07-30</button>
        <span class="tray__badge">5</span>
      </div>
    </footer>
  </div>
</template>

<script setup>
const mainMenus = ['File', 'Edit', 'Render', 'Window', 'Help'];
const nodeMenus = ['View', 'Select', 'Add', 'Node'];
const workspaces = [
  'Layout', 'Modeling', 'Sculpting', 'UV Editing', 'Texture Paint', 'Shading',
  'Animation', 'Rendering', 'Compositing', 'Geometry Nodes', 'Scripting'
];
const idBlocks = [
  { name: 'Scene', icon: 'i-scene', pin: true },
  { name: 'ViewLayer', icon: 'i-layers' }
];

const gridSteps = [1, 27, 53, 78, 104];

// type is the socket colour, fill the slider percentage
const value = (label, v, fill = 0) => ({ label, value: v, fill, type: 'gray' });

const nodes = [
  {
    kind: 'convert', x: -130, y: 169, w: 320, h: 271,
    outs: [{ label: 'Color', type: 'yellow' }, { label: 'Alpha', type: 'gray' }],
    ramp: { modes: ['RGB', 'Linear'], tone: 'white', pos: '0.224' }
  },
  {
    kind: 'convert', x: -122, y: 632, w: 320, h: 271,
    outs: [{ label: 'Color', type: 'yellow' }, { label: 'Alpha', type: 'gray' }],
    ramp: { modes: ['HSV', 'Near'], tone: 'black', pos: '0.082' }
  },
  {
    kind: 'color', title: 'Hue/Saturation/Value', x: 311, y: 717, w: 200, h: 207,
    outs: [{ label: 'Color', type: 'yellow' }],
    ins: [
      value('Hue', '0.500'),
      value('Saturation', '2.000'),
      value('Value', '2.000'),
      value('Fac', '1.000', 100),
      { label: 'Color', type: 'yellow' }
    ]
  },
  {
    kind: 'shader', title: 'Principled BSDF', x: 622, y: 273, w: 321, h: 832,
    outs: [{ label: 'BSDF', type: 'green' }],
    menus: ['GGX', 'Random Walk'],
    ins: [
      { label: 'Base Color', type: 'yellow', tone: 'red' },
      value('Subsurface', '0.000'),
      { label: 'Subsurface Radius', type: 'blue', menu: true },
      { label: 'Subsurface C...', type: 'yellow', tone: 'light' },
      value('Subsurface IOR', '1.400', 13),
      value('Subsurface Anisotropy', '0.000'),
      value('Metallic', '0.010', 1),
      value('Specular', '0.500', 50),
      value('Specular Tint', '0.000'),
      value('Roughness', '1.000', 100),
      value('Anisotropic', '0.000'),
      value('Anisotropic Rotation', '0.000'),
      value('Sheen', '0.000'),
      value('Sheen Tint', '0.500', 50),
      value('Clearcoat', '0.000'),
      value('Clearcoat Roughness', '0.030', 2),
      value('IOR', '1.450'),
      value('Transmission', '0.040', 3),
      value('Transmission Roughness', '0.000'),
      { label: 'Emission', type: 'yellow' },
      value('Emission Strength', '1.000'),
      value('Alpha', '1.000', 100),
      { label: 'Normal', type: 'blue' },
      { label: 'Clearcoat Normal', type: 'blue' },
      { label: 'Tangent', type: 'blue' }
    ]
  },
  {
    kind: 'shader', title: 'Transparent BSDF', x: 998, y: 673, w: 187, h: 98,
    outs: [{ label: 'BSDF', type: 'green' }],
    ins: [{ label: 'Color', type: 'yellow', tone: 'white' }]
  },
  {
    kind: 'shader', title: 'Mix Shader', x: 1291, y: 123, w: 187, h: 154,
    outs: [{ label: 'Shader', type: 'green' }],
    ins: [
      { label: 'Fac', type: 'gray' },
      { label: 'Shader', type: 'green' },
      { label: 'Shader', type: 'green' }
    ]
  },
  {
    kind: 'output', title: 'Material Output', x: 1590, y: 133, w: 187, h: 156,
    menus: ['All'],
    ins: [
      { label: 'Surface', type: 'green' },
      { label: 'Volume', type: 'green' },
      { label: 'Displacement', type: 'blue' }
    ]
  }
];

// steeper links bend more, nearly level ones stay straight
function wire(x1, y1, x2, y2, color) {
  const dx = x2 - x1;
  const slope = Math.abs(y2 - y1) / dx;
  const handle = Math.round(0.4 * dx * Math.min(1, slope * 3.5));
  return { color, path: `M${x1} ${y1}C${x1 + handle} ${y1} ${x2 - handle} ${y2} ${x2} ${y2}` };
}

const links = [
  wire(190, 213, 1291, 200, 'url(#fade)'),
  wire(198, 676, 311, 904, '#c7c729'),
  wire(511, 762, 622, 946, '#c7c729'),
  wire(943, 318, 1291, 228, '#63c763'),
  wire(1185, 718, 1291, 257, '#63c763'),
  wire(1478, 168, 1590, 210, '#63c763')
];

const objects = [
  { name: 'Collection', icon: 'i-collection-full', root: true },
  { name: 'Area', icon: 'i-bulb', data: ['i-area'] },
  { name: 'Camera', icon: 'i-movie', data: ['i-movie-line'] },
  { name: 'Cube', icon: 'i-meshobj', data: ['i-mesh'] },
  { name: 'Light', icon: 'i-bulb', data: ['i-point'] },
  { name: 'Suzanne', icon: 'i-meshobj', data: ['i-wrench-line', 'i-mesh'], selected: true }
];

const tabs = [
  [{ icon: 'i-tool', label: 'Tool' }],
  [
    { icon: 'i-render', label: 'Render', active: true },
    { icon: 'i-output', label: 'Output' },
    { icon: 'i-layers', label: 'View Layer' },
    { icon: 'i-scene', label: 'Scene' },
    { icon: 'i-world', label: 'World', tint: 'tint-red' }
  ],
  [{ icon: 'i-collection', label: 'Collection', tint: 'tint-white' }],
  [
    { icon: 'i-object', label: 'Object', tint: 'tint-orange' },
    { icon: 'i-wrench', label: 'Modifiers', tint: 'tint-blue' },
    { icon: 'i-particles', label: 'Particles', tint: 'tint-blue' },
    { icon: 'i-physics', label: 'Physics', tint: 'tint-blue' },
    { icon: 'i-constraint', label: 'Constraints', tint: 'tint-blue' },
    { icon: 'i-mesh', label: 'Data', tint: 'tint-green' },
    { icon: 'i-material', label: 'Material', tint: 'tint-red' }
  ],
  [{ icon: 'i-texture', label: 'Texture', tint: 'tint-red' }]
];

const panels = [
  { title: 'Sampling', open: true },
  { title: 'Ambient Occlusion', check: true },
  { title: 'Bloom', check: true },
  { title: 'Depth of Field' },
  { title: 'Subsurface Scattering' },
  { title: 'Screen Space Reflections', check: false },
  { title: 'Motion Blur', check: false, open: true },
  { title: 'Volumetrics' },
  { title: 'Performance' },
  { title: 'Curves' },
  { title: 'Shadows' },
  { title: 'Indirect Lighting' },
  { title: 'Film' },
  { title: 'Simplify', check: false },
  { title: 'Grease Pencil' },
  { title: 'Freestyle', check: false }
];

const hints = [
  { text: 'Select', button: 'M8 1v10H1V5q0-4 4-4z' },
  { text: 'Zoom 2D View', button: 'M6 4h5v8H6z' },
  { text: 'Cut Links', button: 'M9 1v10h7V5q0-4-4-4z' }
];
</script>

<style>
body {
  margin: 0;
  background: #161616;
  overflow: hidden;
}
</style>

<style scoped>
.desktop {
  display: flex;
  flex-direction: column;
  height: 100vh;
  font: 16px/20px "DejaVu Sans", "Noto Sans CJK KR", sans-serif;
  color: #e0e0e0;
}

.desktop *,
.desktop *::before,
.desktop *::after {
  box-sizing: border-box;
}

.sprite {
  position: absolute;
  width: 0;
  height: 0;
}

button,
input,
select {
  margin: 0;
  padding: 0;
  border: 0;
  background: none;
  color: inherit;
  font: inherit;
  text-shadow: inherit;
  min-width: 0;
  opacity: 1;
}

h1,
h2,
h3,
p,
ul {
  margin: 0;
  padding: 0;
  font: inherit;
  list-style: none;
}

.icon {
  width: 22px;
  height: 22px;
  flex: none;
  display: block;
}

.soft {
  color: #a0a0a0;
}

.dim {
  color: #6c6c6c;
}

.caret {
  width: 10px;
  height: 10px;
  flex: none;
  pointer-events: none;
}

.ko {
  font-size: 19px;
}

/* Window frame */
.titlebar {
  height: 34px;
  flex: none;
  display: flex;
  align-items: center;
  background: #f3f3f3;
  color: #111;
  font: 17px/34px "Open Sans", "Noto Sans CJK KR", sans-serif;
}

.titlebar__logo {
  width: 24px;
  height: 24px;
  margin: 0 5px 0 2px;
}

.titlebar__buttons {
  margin: 0 2px 0 auto;
  display: flex;
}

.titlebar__buttons button {
  width: 70px;
  height: 34px;
  display: grid;
  place-items: center;
}

.titlebar__buttons svg {
  width: 16px;
  height: 16px;
  fill: none;
  stroke: #111;
  stroke-width: 1.4;
}

.blender {
  flex: 1;
  min-height: 0;
  display: flex;
  flex-direction: column;
  background: #161616;
  text-shadow: 0 1px 2px rgba(0, 0, 0, 0.6);
}

.topbar {
  height: 38px;
  flex: none;
  display: flex;
  align-items: center;
  padding: 1px 11px 0 13px;
  background: #1d1d1d;
}

.topbar__logo {
  width: 24px;
  height: 24px;
  margin-right: 3px;
}

.menus {
  display: flex;
}

.menus button {
  padding: 0 11px;
}

.workspaces {
  display: flex;
  gap: 2px;
  align-self: flex-end;
  margin: 0 auto 0 23px;
}

.workspaces button {
  height: 29px;
  padding: 0 13px;
  border-radius: 6px 6px 0 0;
  color: #989898;
}

.workspaces .active {
  background: #303030;
  color: #fff;
}

.workspaces .workspaces__add {
  padding: 0 8px;
}

.workspaces__add svg {
  width: 14px;
  height: 14px;
  display: block;
}

.group {
  display: flex;
  height: 29px;
  border: 1px solid #3d3d3d;
  border-radius: 6px;
  overflow: hidden;
}

.group button {
  width: 29px;
  display: flex;
  align-items: center;
  justify-content: center;
  gap: 2px;
}

.group .group__menu {
  width: 45px;
  background: #282828;
}

.group .group__lit {
  background: #545454;
  border-left: 1px solid #3d3d3d;
}

.group .group__off {
  background: #303030;
  color: #5a5a5a;
}

.group .group__on {
  background: #4772b3;
  color: #fff;
}

.group .group__drop {
  background: #282828;
}

.group--overlay {
  width: 58px;
}

.idblock {
  width: 278px;
  margin-left: 7px;
}

.idblock__name {
  flex: 1;
  display: flex;
  align-items: center;
  width: 174px;
  padding: 0 6px 0 11px;
  border-left: 1px solid #3d3d3d;
  background: #1d1d1d;
}

.idblock__name input {
  flex: 1;
}

.btn {
  height: 29px;
  width: 46px;
  flex: none;
  display: flex;
  align-items: center;
  justify-content: center;
  gap: 2px;
  border: 1px solid #3d3d3d;
  border-radius: 6px;
  background: #282828;
}

.btn--off,
.btn--new {
  width: 28px;
  background: #383838;
}

.btn--new {
  background: #545454;
}

.plain {
  display: flex;
}

.menu {
  position: relative;
  display: flex;
  align-items: center;
  border: 1px solid #3d3d3d;
  border-radius: 6px;
  background: #282828;
}

.menu select {
  appearance: none;
  width: 100%;
  height: 100%;
  padding: 0 20px 0 11px;
}

.menu .caret {
  position: absolute;
  right: 4px;
}

.check {
  display: flex;
  align-items: center;
  gap: 5px;
  color: #fff;
}

.check input {
  appearance: none;
  width: 19px;
  height: 19px;
  border-radius: 4px;
  background: #545454;
  display: grid;
  place-items: center;
}

.check input:checked {
  background: #4772b3;
}

.check input:checked::after {
  content: "";
  width: 6px;
  height: 12px;
  margin-bottom: 3px;
  border: solid #fff;
  border-width: 0 2px 2px 0;
  transform: rotate(40deg);
}

/* Editors */
.areas {
  flex: 1;
  min-height: 0;
  display: flex;
  gap: 3px;
  padding: 2px 1px 2px 0;
}

.header {
  height: 37px;
  flex: none;
  display: flex;
  align-items: center;
  padding: 1px 11px 0;
}

.editor {
  flex: 1;
  min-width: 0;
  display: flex;
  flex-direction: column;
  border-radius: 6px;
  overflow: hidden;
  background: #1d1d1d;
}

.editor > .header {
  background: #232323;
  padding-right: 10px;
}

.editor__mode {
  width: 135px;
  height: 29px;
  margin: 0 7px;
  padding-left: 6px;
}

.editor__menus {
  margin-right: 8px;
}

.editor__slot {
  width: 116px;
  height: 29px;
  margin: 0 6px 0 238px;
}

.editor > .header > .plain {
  margin-left: 10px;
}

.header__right {
  margin-left: auto;
  display: flex;
  gap: 8px;
}

.canvas {
  position: relative;
  flex: 1;
  min-height: 0;
  overflow: hidden;
  font-size: 14px;
}

.canvas__wires {
  position: absolute;
  inset: 0;
  width: 100%;
  height: 100%;
}

.crumbs {
  position: relative;
  display: flex;
  align-items: center;
  padding-top: 22px;
  font-size: 16px;
}

.crumbs .icon {
  margin-right: 13px;
}

.crumbs__sep,
.crumbs__tab {
  width: 14px;
  height: 14px;
  margin: 0 10px 0 20px;
}

.crumbs__tab {
  margin: 0 17px 0 -3px;
}

.canvas__vbar,
.canvas__hbar {
  position: absolute;
  right: 2px;
  top: 14px;
  bottom: 21px;
  width: 6px;
  border-radius: 3px;
  background: #333;
}

.canvas__hbar {
  left: calc(50% - 6px);
  right: 13px;
  top: auto;
  bottom: 2px;
  width: auto;
  height: 5px;
}

.canvas__side {
  position: absolute;
  right: 0;
  top: 22px;
  width: 12px;
  height: 20px;
  border-radius: 4px 0 0 4px;
  background: #191919;
}

.canvas__side svg {
  width: 12px;
  height: 12px;
  display: block;
  transform: scaleX(-1);
}

/* Nodes */
.node {
  position: absolute;
  display: flex;
  flex-direction: column;
  padding-bottom: 6px;
  border-radius: 5px;
  background: #303030;
  box-shadow: 0 0 0 1px #161616, 0 4px 12px rgba(0, 0, 0, 0.7);
}

.node__title {
  height: 26px;
  flex: none;
  display: flex;
  align-items: center;
  gap: 6px;
  padding-left: 12px;
  border-radius: 5px 5px 0 0;
  border-bottom: 1px solid rgba(0, 0, 0, 0.3);
  white-space: nowrap;
}

.node__title svg {
  width: 14px;
  height: 14px;
  flex: none;
}

.node__title--shader {
  background: #2b652b;
}

.node__title--convert {
  background: #246283;
}

.node__title--color {
  background: #6e6e1d;
}

.node__title--output {
  background: #3c1d26;
}

.node__outs {
  padding-top: 5px;
}

.node__outs p {
  position: relative;
  height: 28px;
  line-height: 28px;
  padding-right: 14px;
  text-align: right;
}

.socket {
  position: absolute;
  left: -6px;
  top: calc(50% - 6px);
  width: 12px;
  height: 12px;
  border: 1px solid #161616;
  border-radius: 50%;
}

.socket--out {
  left: auto;
  right: -6px;
}

.gray {
  background: #a1a1a1;
}

.yellow {
  background: #c7c729;
}

.green {
  background: #63c763;
}

.blue {
  background: #6363c7;
}

.node__menus {
  display: grid;
  gap: 6px;
  padding: 11px 13px 5px;
}

.node__menus.tight {
  padding: 6px 13px 4px;
}

.node__menus .menu {
  height: 26px;
}

.node .menu select {
  padding-left: 8px;
}

.node__ins {
  flex: 1;
  display: grid;
  grid-auto-rows: 1fr;
  margin-top: 4px;
}

.node__ins.after-menus {
  margin-top: 0;
}

.tight + .node__ins {
  margin-bottom: 3px;
}

.node__row {
  position: relative;
  display: flex;
  align-items: center;
  justify-content: space-between;
  padding: 0 13px;
}

.node__row .menu {
  flex: 1;
  height: 26px;
}

.field {
  position: relative;
  flex: 1;
  height: 25px;
  display: flex;
  align-items: center;
  justify-content: space-between;
  padding: 0 18px 0 19px;
  border: 1px solid #3d3d3d;
  border-radius: 5px;
  background: #545454;
  overflow: hidden;
}

.field span {
  position: relative;
  white-space: nowrap;
}

.field input {
  position: relative;
  width: 48px;
  text-align: right;
}

.field__fill {
  position: absolute;
  left: 0;
  top: 0;
  bottom: 0;
  background: #4772b3;
}

.swatch {
  width: calc(60% - 6px);
  height: 24px;
  border-radius: 4px;
}

.red {
  background: #ff0029;
}

.light {
  background: #ececec;
}

.white {
  background: #fff;
}

.black {
  background: #000;
}

.ramp {
  padding: 18px 13px 0 0;
}

.ramp__modes {
  display: flex;
  height: 26px;
  width: 171px;
  margin-left: auto;
}

.ramp__modes .menu {
  flex: 1;
}

.ramp__modes .menu:first-child {
  border-radius: 6px 0 0 6px;
}

.ramp__modes .menu:last-child {
  margin-left: -1px;
  border-radius: 0 6px 6px 0;
}

.ramp__band {
  height: 27px;
  margin: 5px 8px 12px 0;
  border: 1px solid #000;
  border-bottom: 1px solid #777;
}

.ramp__pos {
  width: 197px;
  margin: 0 0 8px auto;
}

.ramp__swatch {
  display: block;
  width: 100%;
}

/* Outliner */
.sidebar {
  width: 442px;
  flex: none;
  display: flex;
  flex-direction: column;
  gap: 3px;
}

.outliner,
.props {
  border-radius: 6px;
  overflow: hidden;
  background: #2b2b2b;
}

.outliner .btn + .btn {
  margin-left: 7px;
}

.search {
  width: 172px;
  height: 29px;
  display: flex;
  align-items: center;
  gap: 6px;
  padding: 0 6px;
  border: 1px solid #3d3d3d;
  border-radius: 6px;
  background: #1d1d1d;
}

.search input {
  flex: 1;
}

.outliner .search {
  margin-left: 22px;
}

.outliner .outliner__filter {
  margin-left: auto;
}

.outliner__body {
  position: relative;
  height: 184px;
  overflow: hidden;
}

.tree {
  margin-top: -5px;
}

.tree__row {
  height: 29px;
  display: flex;
  align-items: center;
  padding: 0 17px 0 67px;
  background: #2b2b2b;
  color: #c4c4c4;
}

.tree__row:nth-child(even) {
  background: #282828;
}

.tree__row.root {
  padding-left: 38px;
}

.tree__row.selected {
  background: #334d80;
}

.tree__arrow {
  width: 10px;
  height: 10px;
}

.root .tree__arrow {
  transform: rotate(90deg);
}

.tree__icon {
  width: 28px;
  height: 26px;
  margin: 0 5px 0 11px;
  display: grid;
  place-items: center;
  border-radius: 6px;
  color: #c58048;
}

.root .tree__icon {
  color: #e0e0e0;
}

.tree__name {
  padding-top: 2px;
}

.boxed {
  background: #4f4f4f;
  box-shadow: inset 0 0 0 1px #6a6a6a;
}

.selected .boxed {
  background: #5b6f98;
  box-shadow: inset 0 0 0 1px #7082a6;
}

.selected .tree__name {
  color: #ffaf29;
}

.tree__data {
  display: flex;
  gap: 1px;
  margin-left: 30px;
  color: #00b38a;
}

.tree__data > span {
  width: 28px;
  height: 26px;
  display: grid;
  place-items: center;
  border-radius: 6px;
}

.tree__data .wrench {
  color: #6a8fe0;
}

.tree__toggles {
  margin-left: auto;
  display: flex;
  align-items: center;
  gap: 7px;
  padding-bottom: 1px;
  color: #e0e0e0;
}

.tree__check {
  appearance: none;
  width: 15px;
  height: 15px;
  margin-right: 2px;
  border-radius: 1px;
  background: #e8e8e8;
  display: grid;
  place-items: center;
}

.tree__check::after {
  content: "";
  width: 5px;
  height: 9px;
  margin-bottom: 2px;
  border: solid #222;
  border-width: 0 2px 2px 0;
  transform: rotate(40deg);
}

.outliner__line {
  position: absolute;
  left: 42px;
  top: 31px;
  width: 1px;
  height: 131px;
  background: #6b6b6b;
}

.outliner__bar {
  position: absolute;
  right: 2px;
  top: 39px;
  width: 6px;
  height: 125px;
  border-radius: 3px;
  background: rgba(120, 120, 120, 0.35);
}

/* Properties */
.props {
  flex: 1;
  min-height: 0;
  display: flex;
  flex-direction: column;
  background: #303030;
}

.props .search {
  margin-left: 77px;
}

.props .props__options {
  width: 28px;
  margin-left: auto;
}

.props__main {
  flex: 1;
  min-height: 0;
  display: flex;
}

.tabs {
  width: 42px;
  flex: none;
  padding-top: 12px;
  background: #1d1d1d;
  color: #a8a8a8;
}

.tabs__group {
  margin-left: 4px;
  padding-bottom: 5px;
  margin-bottom: 5px;
  border-bottom: 1px solid #161616;
}

.tabs button {
  width: 38px;
  height: 40px;
  display: grid;
  place-items: center;
  border-radius: 6px 0 0 6px;
}

.tabs .active {
  background: #303030;
  color: #e0e0e0;
}

.tint-red {
  color: #b65560;
}

.tint-orange {
  color: #c58048;
}

.tint-blue {
  color: #5f87d4;
}

.tint-green {
  color: #00b38a;
}

.tint-white {
  color: #e0e0e0;
}

.props__body {
  position: relative;
  flex: 1;
  min-width: 0;
  padding: 10px 12px 0 11px;
  overflow: hidden;
}

.props__context {
  height: 34px;
  display: flex;
  align-items: center;
  gap: 13px;
  padding: 0 3px 0 5px;
}

.props__context .plain {
  margin-left: auto;
}

.props__engine {
  display: flex;
  align-items: center;
  justify-content: flex-end;
  gap: 12px;
  margin: 21px 0 14px;
}

.props__engine .menu {
  width: 219px;
  height: 29px;
}

.panel {
  margin-bottom: 2px;
  border-radius: 6px;
  background: #3d3d3d;
}

.panel__head {
  height: 36px;
  display: flex;
  align-items: center;
  padding: 2px 11px 0 12px;
}

.panel__arrow {
  width: 14px;
  height: 14px;
  margin: 0 5px 3px 0;
  color: #b4b4b4;
}

.panel__head .check {
  margin-left: -1px;
  gap: 4px;
  color: inherit;
}

.panel__grip {
  width: 15px;
  height: 8px;
  margin: 0 0 2px auto;
  color: #999;
}

.sampling {
  display: grid;
  grid-template-columns: 148px 1fr;
  column-gap: 13px;
  row-gap: 1px;
  align-items: center;
  padding: 12px 13px 18px 0;
  text-align: right;
}

.sampling > input {
  height: 28px;
  background: #545454;
  text-align: center;
  border-radius: 5px 5px 0 0;
}

.sampling > input + label + input {
  border-radius: 0 0 5px 5px;
}

.sampling .check {
  grid-column: 2;
  margin-top: 11px;
}

.blur {
  display: grid;
  grid-template-columns: 136px 186px;
  column-gap: 13px;
  row-gap: 5px;
  align-items: center;
  padding: 12px 0 14px;
  text-align: right;
  color: #8a8a8a;
}

.blur > input,
.blur .menu {
  height: 27px;
  border-radius: 5px;
  background: #484848;
  text-align: center;
}

.blur .menu {
  border-color: #333;
  background: #303030;
}

.blur .menu select {
  padding-left: 10px;
}

.blur .half {
  background: linear-gradient(90deg, #495e80 49%, #484848 49%);
}

.blur .menu .caret {
  color: #606060;
}

.blur .blur__gap {
  margin-top: 11px;
}

.props__bar {
  position: absolute;
  right: 2px;
  top: 13px;
  bottom: 67px;
  width: 6px;
  border-radius: 3px;
  background: #444;
}

/* Status bar */
.status {
  height: 29px;
  flex: none;
  display: flex;
  align-items: center;
  padding: 0 12px 0 16px;
  background: #1d1d1d;
  color: #8f8f8f;
}

.status__hint {
  width: 350px;
  display: flex;
  align-items: center;
  gap: 16px;
}

.status__hint svg {
  width: 18px;
  height: 24px;
}

.status__version {
  margin-left: auto;
}

/* Taskbar */
.taskbar {
  height: 72px;
  flex: none;
  display: grid;
  grid-template-columns: 1fr auto 1fr;
  align-items: center;
  padding-bottom: 2px;
  border-top: 2px solid #adadad;
  background: #dadada;
  color: #222;
  font: 17px/24px "Open Sans", "Noto Sans CJK KR", sans-serif;
}

.weather {
  display: flex;
  align-items: center;
  gap: 11px;
  padding-left: 32px;
  color: #555;
  text-align: left;
}

.weather svg {
  width: 33px;
  height: 31px;
}

.weather b {
  display: block;
  font-weight: 400;
  color: #111;
}

.apps {
  display: flex;
  align-items: center;
}

.apps button {
  position: relative;
  width: 56px;
  height: 58px;
  margin: 0 5px;
  display: grid;
  place-items: center;
}

.apps button svg {
  width: 36px;
  height: 36px;
}

.apps .apps__search {
  width: 328px;
  height: 47px;
  margin: 0 5px 0 6px;
  display: flex;
  align-items: center;
  gap: 17px;
  padding: 0 15px;
  border: 1px solid #c4c4c4;
  border-bottom: 2px solid #adadad;
  border-radius: 24px;
  background: #f4f4f4;
  font-size: 21px;
}

.apps__search svg {
  width: 24px;
  height: 24px;
}

.apps__search input {
  flex: 1;
}

.apps__search input::placeholder {
  color: #666;
  opacity: 1;
}

.apps .current {
  border: 1px solid #d0d0d0;
  border-radius: 6px;
  background: #efefef;
}

.apps .current::after,
.apps .running::after {
  content: "";
  position: absolute;
  bottom: 0;
  width: 24px;
  height: 5px;
  border-radius: 3px;
  background: #0078d4;
}

.apps .running::after {
  width: 9px;
  background: #7f7f7f;
}

.adobe {
  width: 34px;
  height: 33px;
  border-radius: 6px;
  font: 700 19px/32px "Open Sans", sans-serif;
}

.adobe--ai {
  background: #330000;
  color: #ff9a00;
}

.adobe--ps {
  background: #001e36;
  color: #31a8ff;
}

.tray {
  display: flex;
  align-items: center;
  justify-content: flex-end;
  gap: 24px;
  padding-right: 30px;
}

.tray svg {
  width: 24px;
  height: 24px;
  display: block;
}

.tray__net {
  display: flex;
  gap: 12px;
}

.tray__clock {
  margin-left: 4px;
  text-align: right;
}

.tray__badge {
  width: 23px;
  height: 23px;
  margin-left: -12px;
  border-radius: 50%;
  background: #0067c0;
  color: #fff;
  font-size: 14px;
  line-height: 22px;
  text-align: center;
}
</style>
